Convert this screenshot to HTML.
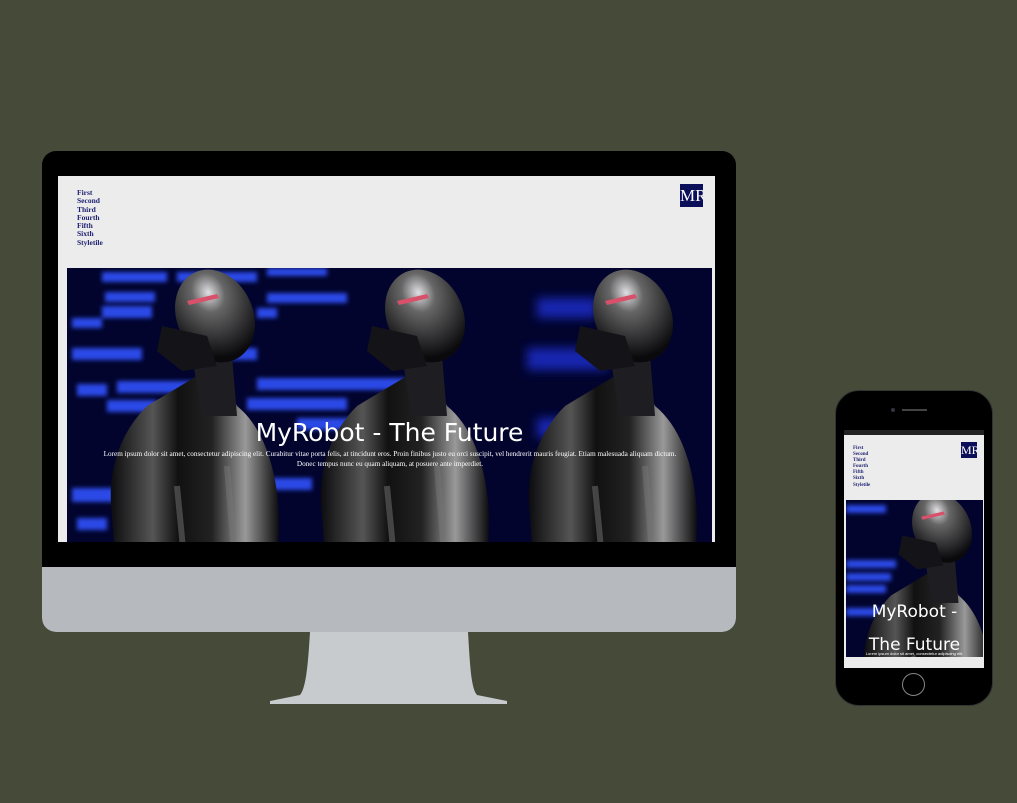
<!DOCTYPE html>
<html><head><meta charset="utf-8"><style>
*{margin:0;padding:0;box-sizing:border-box}
body{width:1017px;height:803px;background:#464a39;position:relative;overflow:hidden;font-family:"Liberation Sans",sans-serif}
.abs{position:absolute}
.nav{font-family:"Liberation Serif",serif;color:#1d1f70;font-weight:bold}
.title{font-family:"DejaVu Sans","Liberation Sans",sans-serif;color:#fff;text-align:center;white-space:nowrap}
</style></head><body>
<div class="abs" style="left:42px;top:151px;width:694px;height:481px;background:#000;border-radius:14px;overflow:hidden">
  <div class="abs" style="left:0;top:416px;width:694px;height:65px;background:#b6b9bd"></div>
</div>
<svg class="abs" style="left:0;top:0" width="1017" height="803">
  <path d="M310 632 L468 632 C470 665 471 688 477 695 L507 701 L507 704 L270 704 L270 701 L300 695 C306 688 308 665 310 632Z" fill="#c8cbce"/>
</svg>
<div class="abs" style="left:58px;top:176px;width:657px;height:366px;background:#ececec"></div>
<div class="abs nav" style="left:77px;top:189px;font-size:7.5px;line-height:8.3px">First<br>Second<br>Third<br>Fourth<br>Fifth<br>Sixth<br>Styletile</div>
<div class="abs" style="left:680px;top:184px;width:23px;height:23px;background:#0b0f5a;color:#fff;font-family:'Liberation Serif',serif;font-size:17px;line-height:24px;overflow:hidden;white-space:nowrap">MR</div>
<svg class="abs" style="left:67px;top:268px" width="645" height="274" viewBox="0 0 645 274">
<defs>
 <filter id="bl"><feGaussianBlur stdDeviation="2"/></filter>
 <filter id="bl2"><feGaussianBlur stdDeviation="5"/></filter>
 <radialGradient id="hg" cx="0.55" cy="0.25" r="0.7"><stop offset="0" stop-color="#e0e0e4"/><stop offset="0.3" stop-color="#666"/><stop offset="1" stop-color="#0a0a0d"/></radialGradient>
 <linearGradient id="bg1" x1="0" x2="1"><stop offset="0" stop-color="#0c0c0e"/><stop offset="0.25" stop-color="#555"/><stop offset="0.4" stop-color="#111"/><stop offset="0.6" stop-color="#222"/><stop offset="0.8" stop-color="#999"/><stop offset="1" stop-color="#0c0c0e"/></linearGradient>
 <g id="robot">
  <path d="M-60 90 C-90 120 -100 160 -95 200 L-90 274 L70 274 L72 200 C70 150 55 110 30 90 L15 60 L-10 60 Z" fill="url(#bg1)"/>
  <path d="M-15 40 L25 40 L30 100 L-5 100Z" fill="#1e1e22"/>
  <ellipse cx="8" cy="0" rx="38" ry="48" transform="rotate(-25 8 0)" fill="url(#hg)"/>
  <path d="M-45 10 L-50 35 L-25 55 L10 50 L0 20Z" fill="#141418"/>
  <path d="M-20 -15 L10 -22 L12 -18 L-18 -11Z" fill="#d9506a"/>
  <path d="M-30 170 L-20 274 M20 150 L30 274" stroke="#777" stroke-width="6" opacity="0.5"/>
 </g>
</defs>
<rect width="645" height="274" fill="#02042e"/>
<g filter="url(#bl)" fill="#2b48e6">
 <rect x="35" y="4" width="65" height="10"/><rect x="110" y="4" width="80" height="10"/><rect x="200" y="0" width="60" height="8"/>
 <rect x="38" y="24" width="50" height="10"/><rect x="200" y="25" width="80" height="10"/>
 <rect x="35" y="38" width="50" height="12"/><rect x="190" y="40" width="20" height="10"/>
 <rect x="5" y="50" width="30" height="10"/>
 <rect x="5" y="80" width="70" height="12"/><rect x="160" y="80" width="30" height="12"/>
 <rect x="10" y="116" width="30" height="12"/><rect x="50" y="113" width="110" height="12"/><rect x="190" y="110" width="150" height="12"/>
 <rect x="40" y="132" width="50" height="12"/><rect x="180" y="130" width="100" height="12"/>
 <rect x="230" y="150" width="60" height="12"/>
 <rect x="5" y="220" width="60" height="14"/><rect x="185" y="210" width="60" height="12"/><rect x="160" y="190" width="20" height="12"/>
 <rect x="10" y="250" width="30" height="12"/>
</g>
<g filter="url(#bl2)" fill="#1b2fd0" opacity="0.8">
 <rect x="470" y="30" width="60" height="20"/><rect x="460" y="80" width="80" height="22"/><rect x="470" y="150" width="60" height="20"/><rect x="480" y="200" width="50" height="30"/>
</g>
<use href="#robot" x="140" y="48"/>
<use href="#robot" x="350" y="48"/>
<use href="#robot" x="558" y="48"/>
</svg>
<div class="abs title" style="left:67px;top:418px;width:645px;font-size:25px">MyRobot - The Future</div>
<div class="abs" style="left:100px;top:449px;width:580px;text-align:center;color:#fff;font-size:7.2px;line-height:10px;font-family:'Liberation Serif',serif">Lorem ipsum dolor sit amet, consectetur adipiscing elit. Curabitur vitae porta felis, at tincidunt eros. Proin finibus justo eu orci suscipit, vel hendrerit mauris feugiat. Etiam malesuada aliquam dictum. Donec tempus nunc eu quam aliquam, at posuere ante imperdiet.</div>

<div class="abs" style="left:835px;top:390px;width:158px;height:316px;background:#000;border-radius:24px;border:1.5px solid #333"></div>
<div class="abs" style="left:891px;top:408px;width:4px;height:4px;border-radius:50%;background:#334"></div>
<div class="abs" style="left:902px;top:409px;width:25px;height:2px;background:#444"></div>
<div class="abs" style="left:844px;top:430px;width:140px;height:238px;background:#ececec;border-top:5px solid #222"></div>
<div class="abs nav" style="left:853px;top:446px;font-size:5px;line-height:6.1px">First<br>Second<br>Third<br>Fourth<br>Fifth<br>Sixth<br>Styletile</div>
<div class="abs" style="left:961px;top:442px;width:16px;height:16px;background:#0b0f5a;color:#fff;font-family:'Liberation Serif',serif;font-size:12px;line-height:17px;overflow:hidden;white-space:nowrap">MR</div>
<svg class="abs" style="left:846px;top:500px" width="137" height="157" viewBox="0 0 137 157">
<rect width="137" height="157" fill="#02042e"/>
<g filter="url(#bl)" fill="#2b48e6"><rect x="0" y="5" width="40" height="8"/><rect x="0" y="60" width="50" height="8"/><rect x="0" y="73" width="45" height="8"/><rect x="0" y="85" width="40" height="8"/><rect x="0" y="108" width="35" height="8"/></g>
<g transform="translate(90 28) scale(0.75)"><use href="#robot"/></g>
</svg>
<div class="abs title" style="left:846px;top:596px;width:137px;font-size:17px;line-height:33px">MyRobot -<br>The Future</div>
<div class="abs" style="left:846px;top:651px;width:137px;text-align:center;color:#fff;font-size:4px;white-space:nowrap;overflow:hidden">Lorem ipsum dolor sit amet, consectetur adipiscing elit.</div>
<div class="abs" style="left:902px;top:673px;width:23px;height:23px;border-radius:50%;border:1.5px solid #888"></div>
</body></html>
